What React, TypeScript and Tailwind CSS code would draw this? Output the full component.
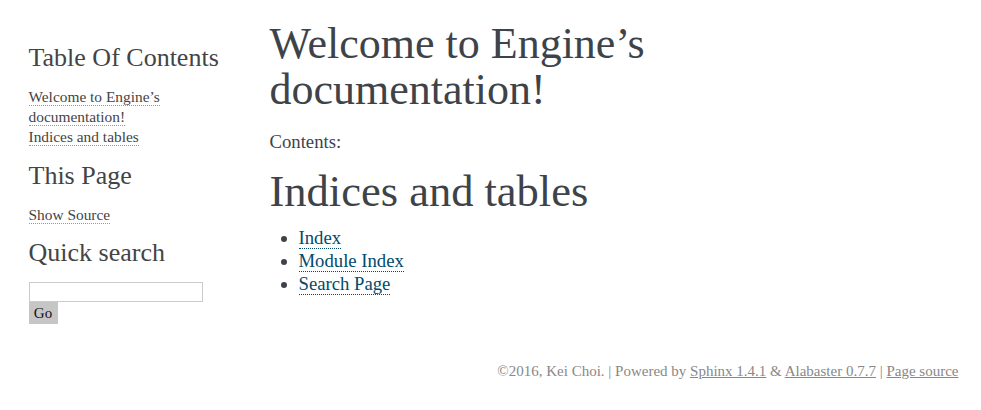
const serif = "font-['Liberation_Serif','Times_New_Roman',serif]";

function SideLink({ children }: { children: React.ReactNode }) {
    return (
        <a href="#" className="text-[#444] border-b border-dotted border-[#999] no-underline">
            {children}
        </a>
    );
}

function BodyLink({ children }: { children: React.ReactNode }) {
    return (
        <a href="#" className="text-[#004B6B] border-b border-dotted border-[#004B6B] no-underline">
            {children}
        </a>
    );
}

export default function App() {
    return (
        <div className={`${serif} bg-white min-h-[410px] text-[#3E4349]`}>
            <div className="w-[940px] mx-auto pt-[21px]">
                <div className="flex">
                    {/* sidebar */}
                    <div className="w-[220px] shrink-0 px-[8px] pt-[23px]">
                        <h3 className="text-[26px] leading-[28px] text-[#444]">Table Of Contents</h3>
                        <ul className="mt-[15px] text-[15.4px] leading-[20px]">
                            <li><SideLink>Welcome to Engine’s documentation!</SideLink></li>
                            <li><SideLink>Indices and tables</SideLink></li>
                        </ul>
                        <h3 className="mt-[15px] text-[26px] leading-[28px] text-[#444]">This Page</h3>
                        <ul className="mt-[15px] text-[15.4px] leading-[20px]">
                            <li><SideLink>Show Source</SideLink></li>
                        </ul>
                        <h3 className="mt-[14px] text-[26px] leading-[28px] text-[#444]">Quick search</h3>
                        <form className="mt-[15px] flex flex-col items-start">
                            <input type="text" className="w-[174px] h-[20px] border border-[#ccc] bg-white outline-none" />
                            <button type="button" className="h-[22px] w-[29px] bg-[#c6c6c6] text-[15px] leading-[22px] text-[#111]">
                                Go
                            </button>
                        </form>
                    </div>

                    {/* body */}
                    <div className="w-[720px] pl-[29px] pr-[30px]">
                        <h1 className="max-w-[620px] text-[44px] leading-[46px] font-normal">
                            Welcome to Engine’s documentation!
                        </h1>
                        <p className="mt-[17px] text-[18.7px] leading-[24px]">Contents:</p>
                        <h2 className="mt-[15px] text-[44.5px] leading-[44px] font-normal">Indices and tables</h2>
                        <ul className="mt-[13px] list-disc pl-[29px] text-[18.7px] leading-[23px]">
                            <li><BodyLink>Index</BodyLink></li>
                            <li><BodyLink>Module Index</BodyLink></li>
                            <li><BodyLink>Search Page</BodyLink></li>
                        </ul>
                    </div>
                </div>

                <div className="mt-[37px] pr-[2px] text-right text-[15px] leading-[20px] text-[#888]">
                    ©2016, Kei Choi. | Powered by <a href="#" className="underline text-[#888]">Sphinx 1.4.1</a> &amp;{' '}
                    <a href="#" className="underline text-[#888]">Alabaster 0.7.7</a> |{' '}
                    <a href="#" className="underline text-[#888]">Page source</a>
                </div>
            </div>
        </div>
    );
}
